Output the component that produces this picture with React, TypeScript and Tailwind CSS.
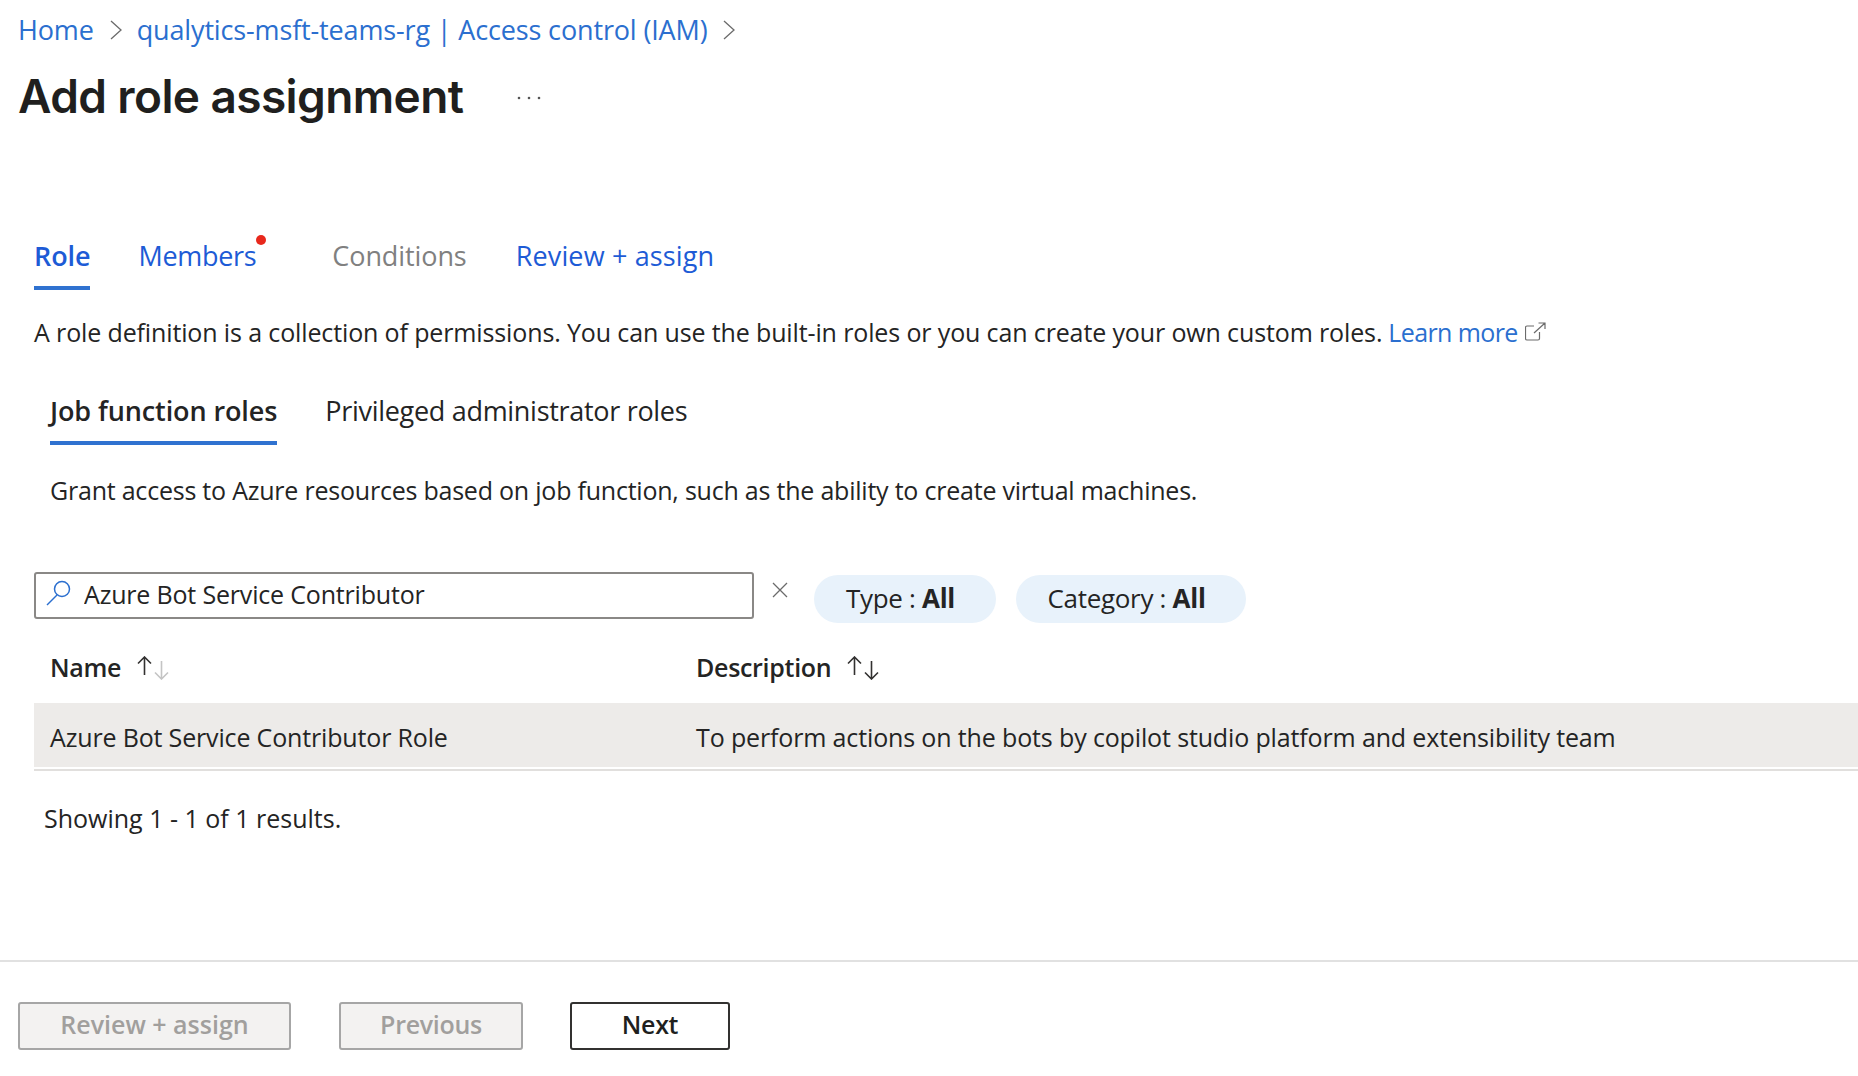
import React from "react";

const Chevron = () => (
  <svg width="12" height="20" viewBox="0 0 12 20" fill="none" stroke="#6b6b6b" strokeWidth="1.3">
    <path d="M1 1l10 9L1 19" />
  </svg>
);

const Arrow = ({ down, color }: { down?: boolean; color: string }) => (
  <svg width="15" height="19" viewBox="0 0 15 19" fill="none" stroke={color} strokeWidth="1.6">
    {down ? <path d="M7.5 0v18M1 11.5l6.5 6.5 6.5-6.5" /> : <path d="M7.5 19V1M1 7.5L7.5 1 14 7.5" />}
  </svg>
);

export default function App() {
  return (
    <div className="w-[1858px] h-[1076px] bg-white overflow-hidden text-[#242424] font-['Open_Sans',sans-serif] text-[25px] tracking-[-0.3px]">
      <nav className="h-[60px] flex items-center pl-[18px] text-[#2b6fcf] text-[27px] tracking-[-0.15px]">
        <span>Home</span>
        <span className="ml-[16px] mr-[15px]"><Chevron /></span>
        <span>qualytics-msft-teams-rg | Access control (IAM)</span>
        <span className="ml-[16px]"><Chevron /></span>
      </nav>
      <div className="h-[76px] flex items-center pl-[18px]">
        <h1 className="pb-[4px] text-[46px] font-semibold tracking-[-0.6px] text-[#201f1e] font-['Inter',sans-serif]">Add role assignment</h1>
        <svg className="ml-[54px]" width="24" height="4" viewBox="0 0 24 4" fill="#555"><circle cx="2" cy="2" r="1.3" /><circle cx="12" cy="2" r="1.3" /><circle cx="22" cy="2" r="1.3" /></svg>
      </div>
      <div className="mt-[90px] pl-[34px] flex h-[64px] text-[#1d5bd6] text-[27px] tracking-[-0.1px]">
        <div className="h-full flex items-center border-b-4 border-[#2f72d0] font-semibold">Role</div>
        <div className="ml-[48px] h-full pb-1 flex items-center relative tracking-[-0.3px]">
          Members
          <span className="absolute right-[-10px] top-[9px] w-[10px] h-[10px] rounded-full bg-[#e8281c]" />
        </div>
        <div className="ml-[76px] h-full pb-1 flex items-center text-[#808080]">Conditions</div>
        <div className="ml-[49px] h-full pb-1 flex items-center tracking-[0.15px]">Review + assign</div>
      </div>
      <div className="h-[86px] pl-[34px] flex items-center">
        <span className="tracking-[-0.13px]">A role definition is a collection of permissions. You can use the built-in roles or you can create your own custom roles.</span>
        <span className="ml-[6px] text-[#2b6fcf] tracking-[-0.6px]">Learn more</span>
        <svg className="ml-[7px] mb-[3px]" width="21" height="19" viewBox="0 0 21 19" fill="none" stroke="#6b6b6b" strokeWidth="1.2">
          <path d="M9 4H2a1.5 1.5 0 0 0-1.5 1.5v11A1.5 1.5 0 0 0 2 18h11a1.5 1.5 0 0 0 1.5-1.5V10M9 11L20 1M13.5 1H20v6" />
        </svg>
      </div>
      <div className="h-[69px] pl-[50px] flex text-[27px]">
        <div className="h-full pt-[5px] flex items-center border-b-4 border-[#2f72d0] font-semibold tracking-[-0.1px]">Job function roles</div>
        <div className="ml-[48px] h-full pb-1 pt-[5px] flex items-center">Privileged administrator roles</div>
      </div>
      <div className="h-[94px] pl-[50px] pb-[2px] flex items-center tracking-[-0.22px]">Grant access to Azure resources based on job function, such as the ability to create virtual machines.</div>
      <div className="mt-[33px] h-[51px] pl-[34px] flex items-start">
        <div className="w-[720px] h-[47px] border-2 border-[#8a8886] rounded-[3px] flex items-center pl-[10px]">
          <svg width="26" height="26" viewBox="0 0 26 26" fill="none" stroke="#2b6fcf" strokeWidth="1.5" className="mb-[6px]">
            <circle cx="16" cy="9" r="7.5" />
            <path d="M11 15L1 25" />
          </svg>
          <input readOnly value="Azure Bot Service Contributor" className="ml-[12px] mb-[2px] flex-1 min-w-0 outline-none bg-transparent tracking-[-0.18px]" />
        </div>
        <svg className="ml-[18px] mt-[10px]" width="16" height="16" viewBox="0 0 16 16" fill="none" stroke="#6b6b6b" strokeWidth="1.3"><path d="M1 1l14 14M15 1L1 15" /></svg>
        <div className="ml-[26px] mt-[3px] pr-[9px] pb-[2px] w-[182px] h-[48px] rounded-full bg-[#e8f2fb] flex items-center justify-center text-[26px]">Type :&nbsp;<b className="font-bold">All</b></div>
        <div className="ml-[20px] mt-[3px] pr-[9px] pb-[2px] w-[230px] h-[48px] rounded-full bg-[#e8f2fb] flex items-center justify-center text-[26px]">Category :&nbsp;<b className="font-bold">All</b></div>
      </div>
      <div className="ml-[34px] h-[80px] pt-[10px] pl-[16px] flex items-center font-semibold">
        <div className="w-[646px] flex items-center">
          <span>Name</span>
          <span className="ml-[16px] mb-[5px]"><Arrow color="#323130" /></span>
          <span className="ml-[2px] mt-[4px]"><Arrow down color="#c4c4c4" /></span>
        </div>
        <div className="flex items-center">
          <span>Description</span>
          <span className="ml-[16px] mb-[5px]"><Arrow color="#323130" /></span>
          <span className="ml-[2px] mt-[4px]"><Arrow down color="#323130" /></span>
        </div>
      </div>
      <div className="ml-[34px] h-[64px] pl-[16px] pt-[5px] flex items-center bg-[#edebe9]">
        <div className="w-[646px] tracking-[-0.16px]">Azure Bot Service Contributor Role</div>
        <div className="tracking-[-0.14px]">To perform actions on the bots by copilot studio platform and extensibility team</div>
      </div>
      <div className="ml-[34px] mt-[2px] h-[2px] bg-[#e1dfdd]" />
      <div className="h-[96px] pl-[44px] flex items-center tracking-normal">Showing 1 - 1 of 1 results.</div>
      <div className="mt-[93px] h-[2px] bg-[#e1e1e1]" />
      <div className="mt-[40px] pl-[18px] flex font-semibold">
        <button className="w-[273px] h-[48px] pb-[2px] border-2 border-[#a6a6a6] rounded-[3px] bg-[#f3f2f1] text-[#a19f9d] tracking-normal">Review + assign</button>
        <button className="ml-[48px] w-[184px] h-[48px] pb-[2px] border-2 border-[#a6a6a6] rounded-[3px] bg-[#f3f2f1] text-[#a19f9d]">Previous</button>
        <button className="ml-[47px] w-[160px] h-[48px] pb-[2px] border-2 border-[#323130] rounded-[3px] bg-white text-[#201f1e]">Next</button>
      </div>
    </div>
  );
}
